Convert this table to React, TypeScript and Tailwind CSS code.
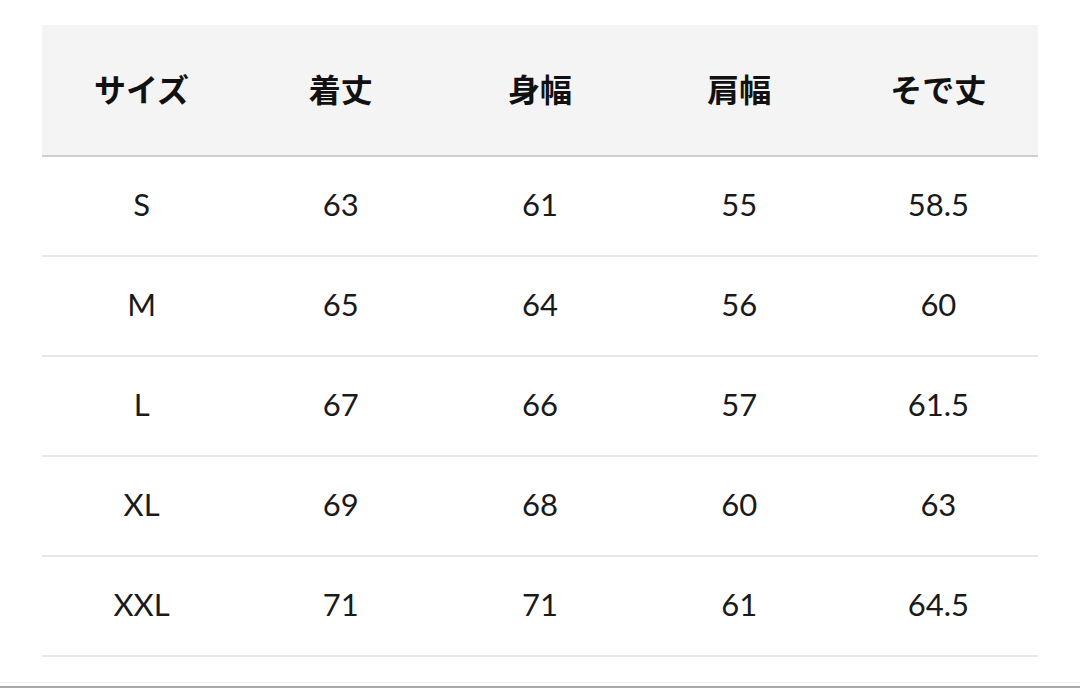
const headers = ['サイズ', '着丈', '身幅', '肩幅', 'そで丈']

const rows: string[][] = [
  ['S', '63', '61', '55', '58.5'],
  ['M', '65', '64', '56', '60'],
  ['L', '67', '66', '57', '61.5'],
  ['XL', '69', '68', '60', '63'],
  ['XXL', '71', '71', '61', '64.5'],
]

export default function App() {
  return (
    <div className="flex h-[688px] w-[1080px] flex-col overflow-hidden bg-white font-['Noto_Sans_CJK_JP',sans-serif]">
      <div className="px-[42px] pt-[25px]">
        <table className="w-full table-fixed border-collapse">
          <thead>
            <tr className="border-b-2 border-[#cfcfcf] bg-[#f4f4f4]">
              {headers.map((h) => (
                <th key={h} className="h-[131px] pb-1 text-center text-[32px] font-bold text-[#111]">
                  {h}
                </th>
              ))}
            </tr>
          </thead>
          <tbody>
            {rows.map((row) => (
              <tr key={row[0]} className="border-b-2 border-[#e6e6e6]">
                {row.map((cell, i) => (
                  <td
                    key={i}
                    className="h-[100px] pb-1 text-center font-['Lato','Noto_Sans_CJK_JP',sans-serif] text-[31px] font-normal text-[#1a1a1a]"
                  >
                    {cell}
                  </td>
                ))}
              </tr>
            ))}
          </tbody>
        </table>
      </div>
      <div className="mt-auto">
        <div className="h-px bg-[#f0f0f0]" />
        <div className="h-[3px] bg-white" />
        <div className="h-[2px] bg-[#a9a9a9]" />
      </div>
    </div>
  )
}
